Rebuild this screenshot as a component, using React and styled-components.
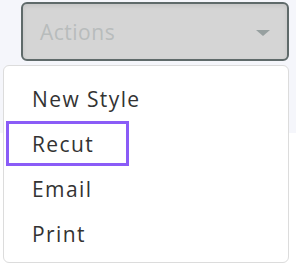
import React from 'react';
import styled, { createGlobalStyle } from 'styled-components';

const GlobalStyle = createGlobalStyle`
  body {
    margin: 0;
    font-family: "Open Sans", "Liberation Sans", sans-serif;
    background: linear-gradient(to bottom, #f5f6fb 0, #f5f6fb 133px, #ffffff 133px);
  }
`;

const Page = styled.div`
  width: 296px;
  height: 266px;
  padding: 2px 0 0 3px;
  box-sizing: border-box;
  display: flex;
  flex-direction: column;
  gap: 4px;
`;

const Trigger = styled.button`
  margin-left: 18px;
  width: 268px;
  height: 59px;
  box-sizing: border-box;
  border: 2px solid #5f6a6a;
  border-radius: 6px;
  background: #d5d5d5;
  box-shadow: inset 0 2px 4px rgba(0, 0, 0, 0.08);
  display: flex;
  align-items: center;
  justify-content: space-between;
  padding: 0 17px 0 17px;
  font-family: "Open Sans", "Liberation Sans", sans-serif;
  font-size: 21px;
  letter-spacing: 0.5px;
  color: #b8bcbc;
`;

const Caret = styled.span`
  width: 0;
  height: 0;
  border-left: 7px solid transparent;
  border-right: 7px solid transparent;
  border-top: 6px solid #97a0a0;
  margin-top: 2px;
`;

const Menu = styled.ul`
  list-style: none;
  margin: 0;
  width: 286px;
  height: 198px;
  box-sizing: border-box;
  padding: 10px 2px;
  background: #ffffff;
  border: 1px solid #dcdcdc;
  border-radius: 6px;
  display: flex;
  flex-direction: column;
`;

const Item = styled.li`
  width: 123px;
  height: 45px;
  flex-shrink: 0;
  box-sizing: border-box;
  border: 3px solid ${(p) => (p.$focused ? '#8a5cf7' : 'transparent')};
  padding: 0 0 0 23px;
  display: flex;
  align-items: center;
  white-space: nowrap;
  font-size: 21px;
  letter-spacing: 1.4px;
  color: #333333;
`;

const items = ['New Style', 'Recut', 'Email', 'Print'];

export default function App() {
  return (
    <Page>
      <GlobalStyle />
      <Trigger>
        Actions
        <Caret />
      </Trigger>
      <Menu>
        {items.map((label) => (
          <Item key={label} $focused={label === 'Recut'}>
            {label}
          </Item>
        ))}
      </Menu>
    </Page>
  );
}
